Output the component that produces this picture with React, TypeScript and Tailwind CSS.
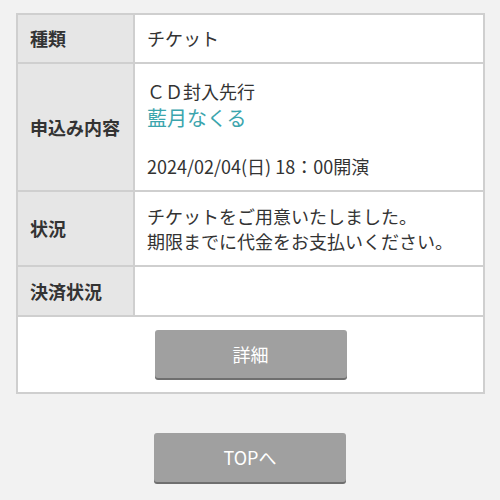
export default function App() {
  const rows = [
    { label: "種類", pad: "pt-[11px] pb-[11px]", content: <span>チケット</span> },
    {
      label: "申込み内容",
      pad: "pt-[15px] pb-[11px]",
      content: (
        <div>
          <div>ＣＤ封入先行</div>
          <div className="text-[20px] leading-[27px] text-[#3ba5ad]">藍月なくる</div>
          <div className="h-[23px]" />
          <div>2024/02/04(日) 18：00開演</div>
        </div>
      ),
    },
    {
      label: "状況",
      pad: "pt-[12px] pb-[11px]",
      content: (
        <div>
          チケットをご用意いたしました。
          <br />
          期限までに代金をお支払いください。
        </div>
      ),
    },
    { label: "決済状況", pad: "pt-[12px] pb-[11px]", content: <span>&nbsp;</span> },
  ];

  return (
    <div
      className="min-h-[500px] bg-[#f2f2f2] pt-[13px] text-[#333]"
      style={{ fontFamily: '"Noto Sans CJK JP", "Noto Sans", sans-serif' }}
    >
      <div className="mx-[16px] w-[469px] border-2 border-[#cfcfcf] bg-white">
        <table className="w-full border-collapse">
          <tbody>
            {rows.map((r) => (
              <tr key={r.label} className="border-b-2 border-[#cfcfcf]">
                <th className="w-[116px] border-r-2 border-[#cfcfcf] bg-[#e6e6e6] pl-[12px] text-left align-middle text-[18px] font-bold">
                  {r.label}
                </th>
                <td className={`pl-[12px] text-[18px] leading-[25px] ${r.pad}`}>{r.content}</td>
              </tr>
            ))}
          </tbody>
        </table>
        <div className="flex justify-center pb-[14px] pt-[13px]">
          <button className="h-[48px] w-[192px] rounded-[3px] bg-[#a0a0a0] text-[18px] text-white shadow-[0_2px_0_#6f6f6f]">
            詳細
          </button>
        </div>
      </div>
      <div className="mt-[39px] flex justify-center">
        <button className="h-[49px] w-[192px] rounded-[3px] bg-[#a0a0a0] text-[18px] text-white shadow-[0_2px_0_#6f6f6f]">
          TOPへ
        </button>
      </div>
    </div>
  );
}
